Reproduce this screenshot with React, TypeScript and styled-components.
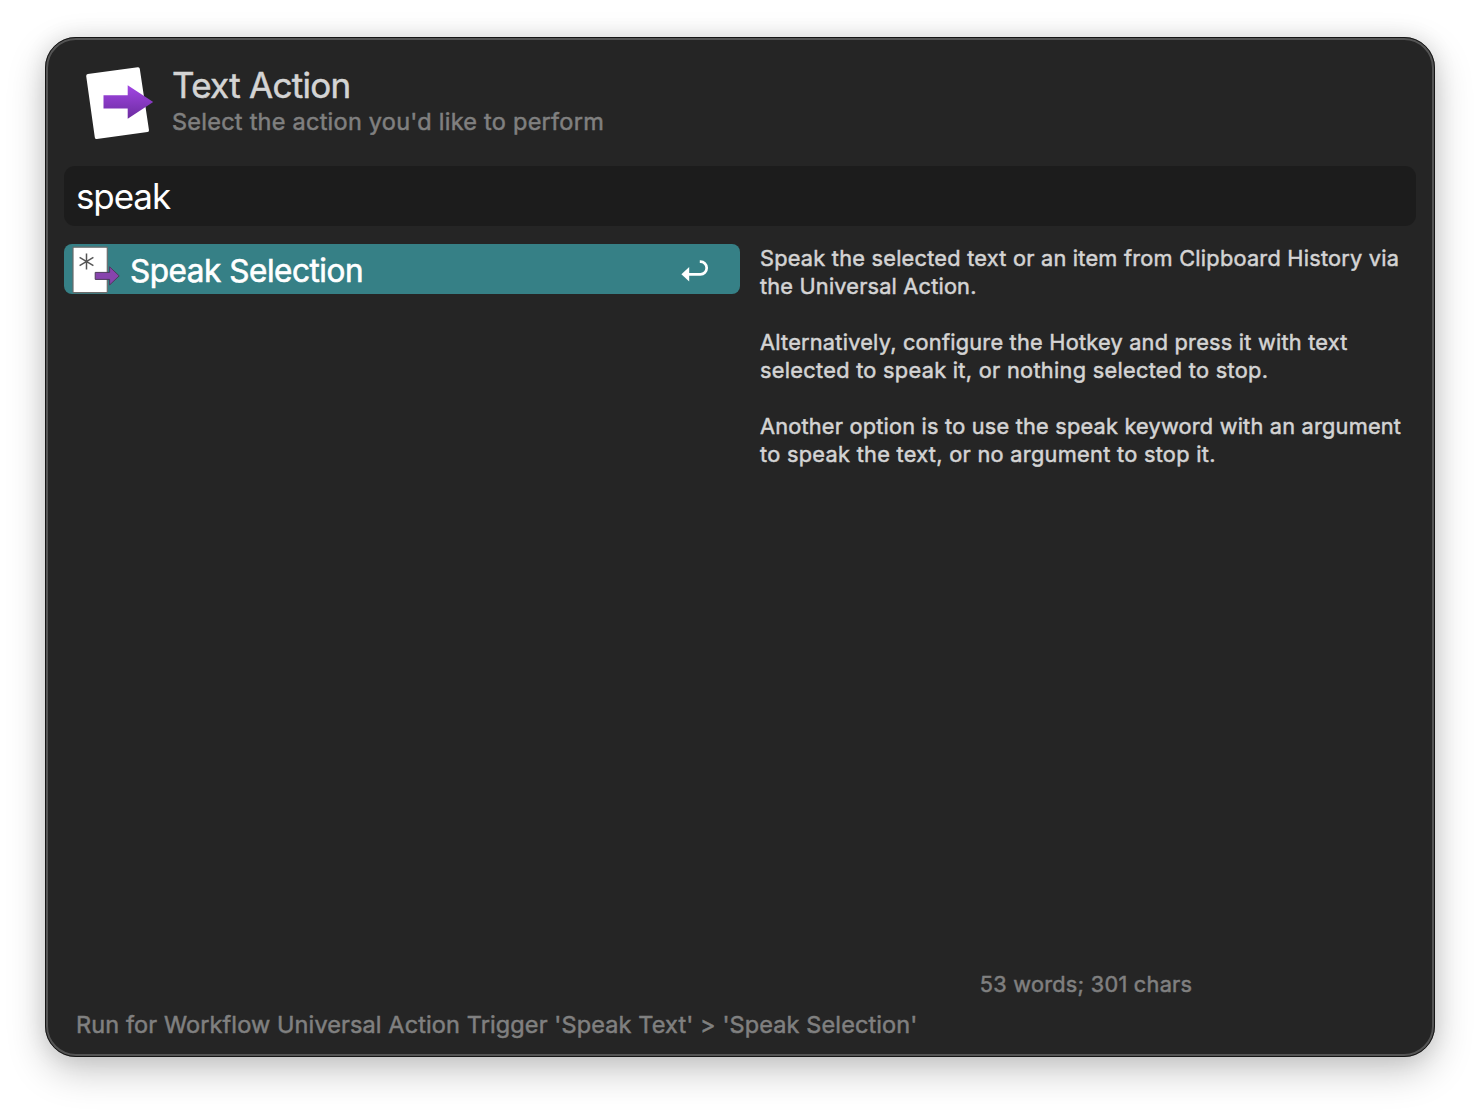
import React from "react";
import styled, { createGlobalStyle } from "styled-components";

const Global = createGlobalStyle`
  *, *::before, *::after { box-sizing: border-box; }
  body {
    margin: 0;
    background: #fff;
    font-family: Inter, "Liberation Sans", sans-serif;
    -webkit-font-smoothing: antialiased;
  }
  p, h1 { margin: 0; }
`;

const Desktop = styled.div`
  width: 1480px;
  height: 1110px;
  padding: 37px 45px 53px;
  overflow: hidden;
`;

const Window = styled.main`
  display: flex;
  flex-direction: column;
  width: 1390px;
  height: 1020px;
  padding: 26px 16px 0;
  border: 3px solid #545454;
  border-radius: 31px;
  background: #252525;
  box-shadow: 0 14px 38px rgba(0, 0, 0, 0.22), 0 0 22px rgba(0, 0, 0, 0.1);
  outline: 1px solid #151515;
  outline-offset: -1px;
`;

const Header = styled.header`
  display: flex;
  flex: none;
  height: 100px;
  padding-left: 20px;
`;

const HeaderText = styled.div`
  padding-left: 18px;
`;

const Line = styled.p<{ $tracking?: number }>`
  letter-spacing: ${(p) => p.$tracking ?? 0}px;
  white-space: pre;
`;

const Title = styled.h1`
  margin-top: -1px;
  font-size: 35px;
  font-weight: 400;
  line-height: 40px;
  letter-spacing: -0.7px;
  color: #d4d4d4;
  -webkit-text-stroke: 0.5px #d4d4d4;
`;

const Subtitle = styled(Line)`
  margin-top: 1px;
  font-size: 23.5px;
  line-height: 32px;
  color: #808080;
  -webkit-text-stroke: 0.5px #808080;
`;

const SearchField = styled.div`
  display: flex;
  align-items: center;
  flex: none;
  height: 60px;
  padding-left: 12px;
  border-radius: 11px;
  background: #1c1c1c;
`;

const Query = styled(Line)`
  font-size: 35px;
  line-height: 40px;
  color: #fff;
`;

const Content = styled.section`
  display: flex;
  flex: none;
  gap: 20px;
  height: 772px;
  padding-top: 18px;
`;

const Results = styled.div`
  flex: none;
  width: 676px;
`;

const ResultRow = styled.div`
  display: flex;
  align-items: center;
  height: 50px;
  padding: 0 30px 0 7px;
  border-radius: 8px;
  background: #368086;
`;

const RowLabel = styled(Line)`
  flex: 1;
  padding: 3px 0 0 9px;
  font-size: 31.5px;
  line-height: 40px;
  color: #fff;
  -webkit-text-stroke: 0.6px #fff;
`;

const ReturnGlyph = styled.svg`
  margin-top: 4px;
`;

const Preview = styled.article`
  display: flex;
  flex-direction: column;
  width: 652px;
  font-size: 21.75px;
  line-height: 28px;
  color: #d4d4d4;
  -webkit-text-stroke: 0.5px #d4d4d4;
`;

const Paragraph = styled.div`
  margin-bottom: 28px;
`;

const Count = styled(Line)`
  margin-top: auto;
  text-align: center;
  color: #808080;
  -webkit-text-stroke: 0.5px #808080;
`;

const Footer = styled.footer`
  padding: 11px 0 0 12px;
`;

const FooterText = styled(Subtitle)`
  margin: 0;
`;

const ActionIcon = () => (
  <svg width="70" height="76" viewBox="84 66 70 76">
    <defs>
      <linearGradient id="arrow" x1="0" y1="0" x2="0" y2="1">
        <stop offset="0" stopColor="#a246e4" />
        <stop offset="1" stopColor="#6c2ca0" />
      </linearGradient>
    </defs>
    <path
      d="M88 75.9L138 69L147.2 130.2L96.6 137.3Z"
      fill="#fff"
      stroke="#fff"
      strokeWidth="3.6"
      strokeLinejoin="round"
    />
    <path d="M103.5 95.3H127.7V85.2L153.2 102L127.7 118.8V108.6H103.5Z" fill="url(#arrow)" />
  </svg>
);

const TriggerIcon = () => (
  <svg width="50" height="50" viewBox="71 244 50 50">
    <rect x="73" y="247.2" width="34.3" height="45.4" rx="0.8" fill="#fff" stroke="#6b6b6b" strokeWidth="1.2" />
    <path
      d="M86.5 253.6V269.4M79.6 257.4L93.4 265.6M79.6 265.6L93.4 257.4"
      fill="none"
      stroke="#555"
      strokeWidth="1.5"
    />
    <path
      d="M95.2 272.4H109.6V266.8L119.2 275.9L109.6 285V279.4H95.2Z"
      fill="#8744ad"
      stroke="#4d3a5c"
      strokeWidth="1"
    />
  </svg>
);

const ReturnIcon = () => (
  <ReturnGlyph width="30" height="26" viewBox="680 258 30 26">
    <path d="M688 274.3H700.4A6.3 6.3 0 0 0 700.4 261.7H699.8" fill="none" stroke="#fff" strokeWidth="2.7" />
    <path d="M681.4 274.3L689.2 267V281.6Z" fill="#fff" />
  </ReturnGlyph>
);

type TextLine = [string, number];

const paragraphs: TextLine[][] = [
  [
    ["Speak the selected text or an item from Clipboard History via", 0.23],
    ["the Universal Action.", 0.18],
  ],
  [
    ["Alternatively, configure the Hotkey and press it with text", 0.22],
    ["selected to speak it, or nothing selected to stop.", 0.29],
  ],
  [
    ["Another option is to use the speak keyword with an argument", 0.2],
    ["to speak the text, or no argument to stop it.", 0.29],
  ],
];

export default function App() {
  return (
    <>
      <Global />
      <Desktop>
        <Window>
          <Header>
            <ActionIcon />
            <HeaderText>
              <Title>Text Action</Title>
              <Subtitle $tracking={0.25}>Select the action you'd like to perform</Subtitle>
            </HeaderText>
          </Header>
          <SearchField>
            <Query $tracking={-1.1}>speak</Query>
          </SearchField>
          <Content>
            <Results>
              <ResultRow>
                <TriggerIcon />
                <RowLabel $tracking={-0.46}>Speak Selection</RowLabel>
                <ReturnIcon />
              </ResultRow>
            </Results>
            <Preview>
              {paragraphs.map((lines, i) => (
                <Paragraph key={i}>
                  {lines.map(([text, tracking]) => (
                    <Line key={text} $tracking={tracking}>
                      {text}
                    </Line>
                  ))}
                </Paragraph>
              ))}
              <Count $tracking={0.25}>53 words; 301 chars</Count>
            </Preview>
          </Content>
          <Footer>
            <FooterText $tracking={0.11}>
              {"Run for Workflow Universal Action Trigger 'Speak Text' > 'Speak Selection'"}
            </FooterText>
          </Footer>
        </Window>
      </Desktop>
    </>
  );
}
